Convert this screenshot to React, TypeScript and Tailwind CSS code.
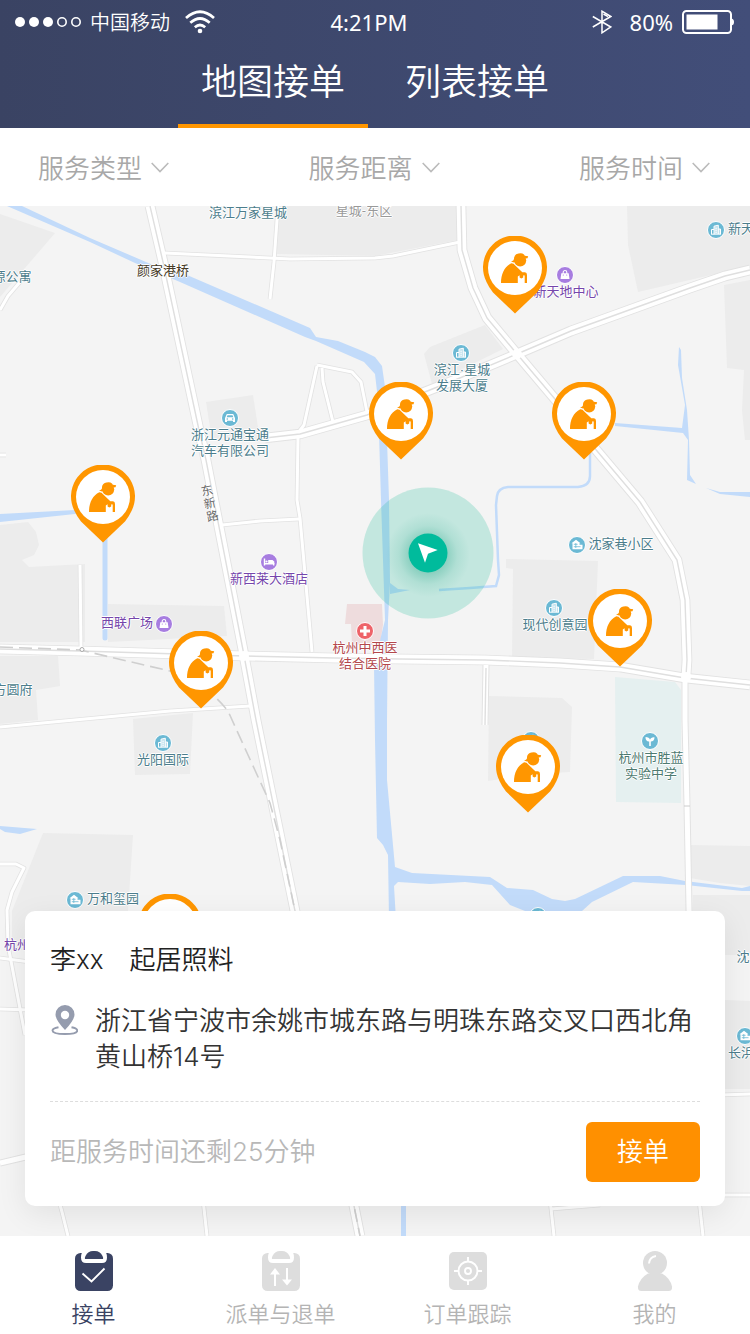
import { useState, type ReactNode } from "react";

type IconKind = "tower" | "house" | "car" | "bag" | "bed" | "cross" | "plant";
type Tone = "teal" | "purple" | "red" | "green" | "brown" | "gray";

const MAP_TOP = 206;
const MAP_W = 750;
const MAP_H = 1030;

const place = (x: number, y: number) => ({
  left: `${(x / MAP_W) * 100}%`,
  top: `${((y - MAP_TOP) / MAP_H) * 100}%`,
});

const toneClass: Record<Tone, string> = {
  teal: "text-[#4c7d8c]",
  purple: "text-[#7546ab]",
  red: "text-[#b3474b]",
  green: "text-[#4d7a70]",
  brown: "text-[#463a26]",
  gray: "text-[#999999]",
};

const labels: { x: number; y: number; text: string[]; tone: Tone }[] = [
  { x: 248, y: 213, text: ["滨江万家星城"], tone: "teal" },
  { x: 364, y: 211, text: ["星城-东区"], tone: "gray" },
  { x: 163, y: 271, text: ["颜家港桥"], tone: "brown" },
  { x: 12, y: 277, text: ["源公寓"], tone: "teal" },
  { x: 566, y: 292, text: ["新天地中心"], tone: "purple" },
  { x: 741, y: 229, text: ["新天"], tone: "teal" },
  { x: 462, y: 378, text: ["滨江·星城", "发展大厦"], tone: "teal" },
  { x: 230, y: 443, text: ["浙江元通宝通", "汽车有限公司"], tone: "teal" },
  { x: 269, y: 579, text: ["新西莱大酒店"], tone: "purple" },
  { x: 127, y: 623, text: ["西联广场"], tone: "purple" },
  { x: 621, y: 544, text: ["沈家巷小区"], tone: "teal" },
  { x: 555, y: 625, text: ["现代创意园"], tone: "teal" },
  { x: 365, y: 656, text: ["杭州中西医", "结合医院"], tone: "red" },
  { x: 13, y: 690, text: ["方圆府"], tone: "teal" },
  { x: 163, y: 760, text: ["光阳国际"], tone: "teal" },
  { x: 651, y: 766, text: ["杭州市胜蓝", "实验中学"], tone: "green" },
  { x: 113, y: 899, text: ["万和玺园"], tone: "teal" },
  { x: 17, y: 945, text: ["杭州"], tone: "purple" },
  { x: 743, y: 957, text: ["沈"], tone: "teal" },
  { x: 741, y: 1053, text: ["长浜"], tone: "teal" },
];

const spots: { x: number; y: number; kind: IconKind; fill: string }[] = [
  { x: 565, y: 275, kind: "bag", fill: "#a77de0" },
  { x: 716, y: 230, kind: "tower", fill: "#6bb9d4" },
  { x: 461, y: 353, kind: "tower", fill: "#6bb9d4" },
  { x: 230, y: 418, kind: "car", fill: "#6bb9d4" },
  { x: 269, y: 562, kind: "bed", fill: "#a77de0" },
  { x: 164, y: 624, kind: "bag", fill: "#a77de0" },
  { x: 577, y: 545, kind: "house", fill: "#6bb9d4" },
  { x: 554, y: 608, kind: "tower", fill: "#6bb9d4" },
  { x: 365, y: 631, kind: "cross", fill: "#ee6369" },
  { x: 163, y: 743, kind: "tower", fill: "#6bb9d4" },
  { x: 650, y: 741, kind: "plant", fill: "#6bb9d4" },
  { x: 75, y: 900, kind: "house", fill: "#6bb9d4" },
  { x: 745, y: 1036, kind: "house", fill: "#6bb9d4" },
  { x: 531, y: 740, kind: "tower", fill: "#6bb9d4" },
  { x: 538, y: 916, kind: "tower", fill: "#6bb9d4" },
];

const pins = [
  { x: 515, y: 268 },
  { x: 401, y: 414 },
  { x: 584, y: 414 },
  { x: 103, y: 497 },
  { x: 201, y: 663 },
  { x: 620, y: 621 },
  { x: 528, y: 767 },
  { x: 170, y: 926 },
];

const blocks = [
  "0,214 55,233 0,297",
  "277,206 458,206 458,240 375,256 277,254",
  "627,206 750,206 750,266 638,292 628,245",
  "724,285 750,280 750,440 745,440 742,410 744,370 727,368",
  "206,402 253,395 260,440 212,440",
  "424,354 430,347 485,325 503,349 432,384",
  "0,525 28,522 36,532 39,545 34,555 22,560 29,567 85,564 85,642 0,642",
  "108,604 224,606 227,636 108,642",
  "0,656 58,656 60,686 36,690 38,720 0,724",
  "133,719 193,713 190,774 135,775",
  "43,833 133,835 128,911 128,950 12,950 12,911",
  "506,559 598,561 594,659 512,658 513,569 506,568",
  "489,696 562,698 572,707 570,772 536,774 488,781",
  "690,845 750,846 750,886 720,883 690,878",
  "693,895 750,895 750,955 693,955",
  "725,1000 750,1001 750,1089 725,1089",
];

const minorRoads = [
  "165,253 290,259 375,258 393,256 460,242",
  "278,206 274,262 270,299",
  "0,310 8,296 20,282",
  "317,365 352,372 361,382 367,412",
  "317,366 304,425 298,433",
  "322,368 323,382 333,422",
  "298,438 297,500 300,518 312,652",
  "222,525 260,521 299,519",
  "80,565 81,648",
  "0,727 170,711 250,706",
  "0,864 16,864 24,868 12,892 7,910 8,945 25,1035",
  "0,958 30,962",
  "0,1009 30,1010",
  "0,455 6,455",
  "56,1190 62,1212 68,1236",
  "202,1190 207,1236",
  "549,1190 554,1236",
  "551,1209 600,1205",
  "698,1190 703,1236",
  "720,1095 750,1094",
  "720,1195 750,1195",
];

const avenues = [
  "0,1163 30,1156",
  "486,665 485,725",
  "685,670 685,720 687,805 690,960",
];

const highways = [
  "150,206 163,262 199,430 206,460 243,650 256,720 295,911 360,1236",
  "461,206 462,250 473,288 487,318 517,354 560,405 592,445 640,502 677,560 685,600 687,660 686,676",
  "750,270 725,276 690,288 571,331 517,354 455,380 367,415 300,434 265,438",
  "0,649 80,651 245,656 335,658 400,659 485,660 560,663 620,667 685,678 750,685",
];

const water = [
  "7,206 22,206 90,238 153,265 187,275 310,328 316,337 338,341 365,352 375,357 382,366 385,387 387,440 389,500 390,583 388,620 387,720 387,780 395,867 412,873 490,877 507,888 533,890 552,899 565,901 575,899 623,876 660,876 685,881 742,888 750,886 750,891 742,891 686,885 633,882 592,902 582,911 570,925 540,925 525,911 510,905 492,885 465,882 430,884 398,882 394,886 396,920 389,920 388,855 383,845 377,838 375,740 374,665 385,620 383,560 381,500 378,400 375,374 364,362 316,341 305,337 180,282 135,263 90,242",
  "0,514 75,510 85,512 75,514 0,522",
  "0,826 37,829 20,834 5,832 0,829",
  "678,365 679,347 681,350 682,378 687,410 689,440 690,475 696,484 687,480 688,440 683,433 615,426 615,423 682,428 685,405",
  "706,488 720,492 750,492 750,497 720,494",
  "390,583 398,589 410,590 390,594",
  "401,1190 406,1190 406,1236 401,1236",
];

function Roads() {
  return (
    <svg
      className="absolute inset-0 h-full w-full"
      viewBox={`0 ${MAP_TOP} ${MAP_W} ${MAP_H}`}
      preserveAspectRatio="none"
      aria-hidden="true"
    >
      <rect x="0" y="206" width="750" height="1030" fill="#f4f4f4" />
      <g fill="#ececec">
        {blocks.map((p) => (
          <polygon key={p} points={p} />
        ))}
      </g>
      <polygon points="347,604 382,604 383,625 380,645 352,645 351,624 345,624" fill="#eedcdd" />
      <polygon points="615,677 675,682 681,690 681,803 616,802" fill="#e5f0f0" />
      <g fill="#c2dbfa">
        {water.map((p) => (
          <polygon key={p} points={p} />
        ))}
      </g>
      <g fill="none" stroke="#c2dbfa">
        <path d="M590 450V476Q590 486 578 487H508Q498 488 497 496L496 505L498 560L499 575L496 586L470 588L439 590" strokeWidth="2.500" />
        <path d="M105 535V638" strokeWidth="5" strokeLinecap="round" />
      </g>
      <g fill="none" stroke="#e2e2e2" strokeLinejoin="round">
        {minorRoads.map((p) => (
          <polyline key={p} points={p} strokeWidth="4.600" />
        ))}
        {avenues.map((p) => (
          <polyline key={p} points={p} strokeWidth="7" />
        ))}
        {highways.map((p) => (
          <polyline key={p} points={p} strokeWidth="10.600" />
        ))}
      </g>
      <g fill="none" stroke="#ffffff" strokeLinejoin="round">
        {minorRoads.map((p) => (
          <polyline key={p} points={p} strokeWidth="3" />
        ))}
        {avenues.map((p) => (
          <polyline key={p} points={p} strokeWidth="5" />
        ))}
        {highways.map((p) => (
          <polyline key={p} points={p} strokeWidth="8.800" />
        ))}
      </g>
      <g fill="none" stroke="#dfdfdf" strokeWidth="1.400" strokeLinejoin="round">
        {highways.map((p) => (
          <polyline key={p} points={p} />
        ))}
        <path d="M486 668L485 725" />
      </g>
      <g fill="#ffffff">
        <circle cx="517" cy="354" r="5" />
        <circle cx="686" cy="677" r="5" />
        <circle cx="244" cy="656" r="5" />
      </g>
      <path d="M684 806h6" stroke="#cccccc" />
      <path
        d="M0 647L80 650L170 671Q205 682 228 711L248 755L270 803L280 840L295 911L360 1236"
        fill="none"
        stroke="#cfcfcf"
        strokeWidth="1.600"
        strokeDasharray="13 6"
      />
      <circle cx="82" cy="649.5" r="2" fill="#fff" stroke="#aaaaaa" />
    </svg>
  );
}

const glyphs: Record<IconKind, ReactNode> = {
  tower: (
    <g>
      <path d="M7 13V5.200L11.300 4.200V8H13.500V13Z" fill="#fff" fillOpacity=".55" />
      <path
        d="M7 13.300V5.200L11.300 4.200V13M4.500 13V8.500H7M11.300 8H13.500V13M4 13.200H14M8.200 7.200h1.800M8.200 9.200h1.800M8.200 11.200h1.800"
        fill="none"
        stroke="#fff"
      />
    </g>
  ),
  house: (
    <g>
      <path d="M8 3.800L12.500 7.200H11.500V8.800H14.500V13.200H4.500V7.200H3.500Z" fill="#fff" />
      <path d="M5.800 8.300h3.800M5.800 10.700h6.700M7.800 7v5" stroke="#6bb9d4" strokeWidth=".8" />
    </g>
  ),
  car: (
    <g>
      <path d="M5.800 5h6.400l1.400 3.300.4.700v4h-2v-1.200H6V13H4V9l.4-.7z" fill="#fff" />
      <path d="M6.500 6.200h5l.8 2H5.700z" fill="#6bb9d4" />
      <circle cx="6.300" cy="10" r=".8" fill="#6bb9d4" />
      <circle cx="11.700" cy="10" r=".8" fill="#6bb9d4" />
    </g>
  ),
  bag: (
    <g>
      <path d="M5.300 7.300h7.400l.8 5.700h-9z" fill="#fff" />
      <path d="M7.200 8.500V6.300a1.800 1.800 0 0 1 3.600 0v2.200" fill="none" stroke="#fff" strokeWidth="1.100" />
      <circle cx="7.300" cy="9" r=".6" fill="#a77de0" />
      <circle cx="10.700" cy="9" r=".6" fill="#a77de0" />
    </g>
  ),
  bed: (
    <g>
      <path d="M4.500 5.500V12.500M4.500 10.800H13.700V12.500" stroke="#fff" strokeWidth="1.400" fill="none" />
      <circle cx="6.500" cy="8.500" r="1.100" fill="#fff" />
      <path d="M8.200 7H12.500L14.300 8.500V11H8.200Z" fill="#fff" />
    </g>
  ),
  cross: <path d="M9 4v10M4 9h10" stroke="#fff" strokeWidth="3" />,
  plant: (
    <path
      d="M9.800 14H8.200V9.600C6 9.800 4.300 8 4.500 5c2.500 0 4 1 4.500 2.800C9.500 6 11 5 13.500 5.200 13.600 8 12 9.600 9.800 9.600z"
      fill="#fff"
    />
  ),
};

function Spot({ kind, fill }: { kind: IconKind; fill: string }) {
  return (
    <svg className="block h-[18px] w-[18px]" viewBox="0 0 18 18" aria-hidden="true">
      <circle cx="9" cy="9" r="8.500" fill={fill} stroke="#fff" />
      {glyphs[kind]}
    </svg>
  );
}

function Pin() {
  return (
    <svg className="block h-[78px] w-[64px]" viewBox="0 0 64 78" aria-hidden="true">
      <path d="M32 77.500L10 56.500A46 46 0 0 1 3.500 46A32 32 0 1 1 60.500 46A46 46 0 0 1 54 56.500Z" fill="#ff9600" />
      <circle cx="32" cy="32" r="27" fill="#fff" />
      <g fill="#ff9600">
        <path d="M18 47C18 38 21.500 30.500 28.300 27.300L30.500 27.800L39.300 36.300H42Q44 36.500 44 39V47H41.700V40Q41.700 38.800 40.200 39.500V41.500L38.300 42.500L36.600 41.500V39.300L34.800 40.500V47Z" />
        <circle cx="37.200" cy="24.400" r="6" />
        <path d="M28 25.600Q31.500 24.600 31 22Q31.500 18.300 35.500 17.600Q38.500 16.400 41 18.400L41.800 19.800L45.200 20.200L44.500 22.200L42 22.500L31 26.500Z" />
      </g>
    </svg>
  );
}

function StatusBar() {
  return (
    <div className="grid h-11 grid-cols-[1fr_auto_1fr] items-center pr-4 pl-1">
      <div className="flex items-center pl-[11px]">
        <svg className="h-[10px] w-[66px]" viewBox="0 0 66 10" fill="#fff" aria-hidden="true">
          <circle cx="5" cy="5" r="5" />
          <circle cx="19" cy="5" r="5" />
          <circle cx="33" cy="5" r="5" />
          <circle cx="47" cy="5" r="4.200" fill="none" stroke="#fff" strokeWidth="1.600" />
          <circle cx="61" cy="5" r="4.200" fill="none" stroke="#fff" strokeWidth="1.600" />
        </svg>
        <span className="ml-[9px] text-[20px] leading-6 font-[350]">中国移动</span>
        <svg className="ml-[14px] h-6 w-8" viewBox="0 0 32 24" fill="none" stroke="#fff" aria-hidden="true">
          <path d="M2 8Q16 -4.500 30 8" strokeWidth="2.700" />
          <path d="M6.300 12.800Q16 4.200 25.700 12.800" strokeWidth="2.700" />
          <path d="M10.800 17.200Q16 12.800 21.200 17.200" strokeWidth="2.700" />
          <circle cx="16" cy="21" r="2.300" fill="#fff" stroke="none" />
        </svg>
      </div>
      <span className="font-['Noto_Sans',sans-serif] text-[22px] leading-6">4:21PM</span>
      <div className="flex items-center justify-end">
        <svg className="h-6 w-5" viewBox="0 0 20 24" fill="none" stroke="#fff" strokeWidth="1.500" aria-hidden="true">
          <path d="M.8 6.500L18.800 17L10 22.800V1.200L18.800 6.500L.8 17" />
          <path d="M11.500 4L16 6.600" />
        </svg>
        <span className="ml-[18px] font-['Noto_Sans',sans-serif] text-[22px] leading-6">80%</span>
        <svg className="ml-[9px] h-6 w-[52px]" viewBox="0 0 52 24" aria-hidden="true">
          <rect x="1" y="1" width="48" height="22" rx="3.500" fill="none" stroke="#fff" strokeWidth="2" />
          <rect x="4.500" y="4.500" width="31" height="15" fill="#fff" />
          <path d="M49.500 8.500Q52 9 52 12T49.500 15.500Z" fill="#fff" />
        </svg>
      </div>
    </div>
  );
}

function Clipboard({ children }: { children: ReactNode }) {
  return (
    <svg className="h-10 w-[38px]" viewBox="0 0 38 40" aria-hidden="true">
      <rect x="0" y="2" width="38" height="38" rx="5.500" fill="currentColor" />
      <path d="M7 1.500Q6 3.500 6 6.500Q6 12 11 12H27Q32 12 32 6.500Q32 3.500 31 1.500Z" fill="#fff" />
      <path d="M10 8Q9.500 7 10.500 5Q13 0 18 0H20Q25 0 27.500 5Q28.500 7 28 8Z" fill="currentColor" />
      {children}
    </svg>
  );
}

const navItems: { label: string; icon: ReactNode }[] = [
  {
    label: "接单",
    icon: (
      <Clipboard>
        <path d="M7.500 22.500L16.500 30.500L29.500 17.500" fill="none" stroke="#fff" strokeWidth="1.900" />
      </Clipboard>
    ),
  },
  {
    label: "派单与退单",
    icon: (
      <Clipboard>
        <path d="M12 23h2v12h-2zM8 23.500L13 17l5 6.500zM24 17h2v12h-2zM20 28.500h10l-5 6z" fill="#fff" />
      </Clipboard>
    ),
  },
  {
    label: "订单跟踪",
    icon: (
      <svg className="h-10 w-[38px]" viewBox="0 0 38 40" aria-hidden="true">
        <rect x="0" y="1" width="38" height="38" rx="5" fill="currentColor" />
        <g fill="none" stroke="#fff" strokeWidth="1.900">
          <circle cx="19" cy="20" r="9.500" />
          <circle cx="19" cy="20" r="3" />
          <path d="M19 6v5M19 29v5M5 20h5M28 20h5" />
        </g>
      </svg>
    ),
  },
  {
    label: "我的",
    icon: (
      <svg className="h-10 w-[38px]" viewBox="0 0 38 40" aria-hidden="true">
        <circle cx="19" cy="12" r="12" fill="currentColor" />
        <path d="M12 22.500H26Q34 27 36 35.500Q36.500 40 32.500 40H5.500Q1.500 40 2 35.500Q4 27 12 22.500Z" fill="currentColor" />
        <path d="M13 12.500Q13.500 6 20 5" fill="none" stroke="#fff" strokeWidth="2" />
      </svg>
    ),
  },
];

export default function App() {
  const [tab, setTab] = useState("地图接单");
  const [nav, setNav] = useState("接单");

  return (
    <div className="flex min-h-screen flex-col bg-white font-['Noto_Sans_CJK_SC',sans-serif]">
      <header className="bg-linear-to-r from-[#3a4363] to-[#424e79] text-white">
        <StatusBar />
        <div className="flex h-[84px] justify-center gap-[14px]">
          {["地图接单", "列表接单"].map((name) => (
            <button
              key={name}
              type="button"
              onClick={() => setTab(name)}
              className={`w-[190px] border-b-4 pb-[10px] text-[36px] font-[350] ${tab === name ? "border-[#ff9600]" : "border-transparent"}`}
            >
              {name}
            </button>
          ))}
        </div>
      </header>

      <div className="flex h-[78px] items-center justify-between pr-10 pl-[38px]">
        {["服务类型", "服务距离", "服务时间"].map((name) => (
          <label key={name} className="flex items-center gap-2 text-[#a8a8a8]">
            <select aria-label={name} className="appearance-none bg-transparent text-[26px] leading-10 font-[350] outline-none">
              <option>{name}</option>
            </select>
            <svg className="h-[11px] w-[18px]" viewBox="0 0 18 11" fill="none" stroke="#bbbbbb" strokeWidth="1.600" aria-hidden="true">
              <path d="M.7 1L9 9.500L17.300 1" />
            </svg>
          </label>
        ))}
      </div>

      <main className="relative flex flex-1 flex-col justify-end overflow-hidden pt-[705px]">
        <Roads />
        {spots.map((s) => (
          <div key={`${s.x}-${s.y}`} className="absolute -translate-x-1/2 -translate-y-1/2" style={place(s.x, s.y)}>
            <Spot kind={s.kind} fill={s.fill} />
          </div>
        ))}
        {labels.map((l) => (
          <div
            key={l.text.join("")}
            className={`absolute -translate-x-1/2 -translate-y-1/2 text-center font-['Liberation_Sans','Noto_Sans_CJK_SC',sans-serif] text-[13px] leading-4 whitespace-nowrap [text-shadow:1px_0_#fff,-1px_0_#fff,0_1px_#fff,0_-1px_#fff] ${toneClass[l.tone]}`}
            style={place(l.x, l.y)}
          >
            {l.text.map((line) => (
              <div key={line}>{line}</div>
            ))}
          </div>
        ))}
        <div
          className="absolute w-[13px] -translate-x-1/2 -translate-y-1/2 -rotate-12 text-[12px] leading-[13px] text-[#6b6b6b] [text-shadow:1px_0_#fff,-1px_0_#fff]"
          style={place(210, 502)}
        >
          东新路
        </div>

        <svg
          className="absolute h-[132px] w-[132px] -translate-x-1/2 -translate-y-1/2"
          style={place(428, 553)}
          viewBox="-66 -66 132 132"
          aria-hidden="true"
        >
          <defs>
            <radialGradient id="glow">
              <stop offset="0.400" stopColor="#0a9a78" stopOpacity="0.320" />
              <stop offset="0.700" stopColor="#0a9a78" stopOpacity="0.100" />
              <stop offset="1" stopColor="#0a9a78" stopOpacity="0" />
            </radialGradient>
          </defs>
          <circle r="65.500" fill="#00b48c" fillOpacity="0.200" />
          <circle r="42" cy="2" fill="url(#glow)" />
          <circle r="19.500" fill="#00bb9c" />
          <path d="M-10 -9.700L9.700 -3L0 .8L-3 9.700Z" fill="#fff" />
        </svg>

        {pins.map((p) => (
          <button
            key={`${p.x}-${p.y}`}
            type="button"
            aria-label="接单"
            className="absolute -mt-8 -translate-x-1/2"
            style={place(p.x, p.y)}
          >
            <Pin />
          </button>
        ))}

        <section className="relative mx-[25px] mb-[30px] rounded-[10px] bg-white px-[25px] pt-[31px] pb-6 font-[Inter,'Noto_Sans_CJK_SC',sans-serif] text-[26px] leading-9 font-[350] text-[#333333] shadow-[0_8px_30px_rgba(0,0,0,0.08)]">
          <h2 className="flex gap-[26px] text-[#222222]">
            <span>李xx</span>
            <span>起居照料</span>
          </h2>
          <div className="mt-[25px] flex">
            <svg className="mt-[2px] mr-[17px] h-[30px] w-7 shrink-0" viewBox="0 0 28 30" aria-hidden="true">
              <path d="M8.500 22.300Q2.500 23.500 2.500 25.500C2.500 28 8 29 15 29S27.300 28 27.300 25.500Q27.300 23.500 21.500 22.300" fill="none" stroke="#959cae" strokeWidth="1.900" />
              <path d="M15 25Q5.500 15 5.500 9.500A9.500 9.500 0 0 1 24.500 9.500Q24.500 15 15 25Z" fill="#959cae" />
              <circle cx="15" cy="10" r="4.200" fill="#fff" />
            </svg>
            <p className="flex-1">浙江省宁波市余姚市城东路与明珠东路交叉口西北角黄山桥14号</p>
          </div>
          <div className="mt-[26px] flex items-center justify-between border-t border-dashed border-[#dddddd] pt-5">
            <span className="text-[#b8b8b8]">距服务时间还剩25分钟</span>
            <button type="button" className="h-[60px] w-[114px] rounded-md bg-[#ff9000] text-white">
              接单
            </button>
          </div>
        </section>
      </main>

      <nav className="grid h-[98px] grid-cols-4 bg-white pt-[15px] pr-[2px]">
        {navItems.map((item) => (
          <button
            key={item.label}
            type="button"
            onClick={() => setNav(item.label)}
            className={`flex flex-col items-center gap-[5px] ${nav === item.label ? "text-[#3a4363]" : "text-[#dddddd]"}`}
          >
            {item.icon}
            <span className={`text-[22px] leading-8 font-[350] ${nav === item.label ? "text-[#3a4363]" : "text-[#b4b4b4]"}`}>{item.label}</span>
          </button>
        ))}
      </nav>
    </div>
  );
}
